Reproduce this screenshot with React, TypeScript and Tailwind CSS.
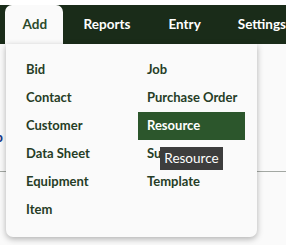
import React from "react";

const left = ["Bid", "Contact", "Customer", "Data Sheet", "Equipment", "Item"];
const right = ["Job", "Purchase Order", "Resource", "Subcontract", "Template"];

export default function App() {
  return (
    <div
      className="relative w-[286px] h-[245px] overflow-hidden bg-[#fafafa]"
      style={{ fontFamily: "Lato, 'Open Sans', sans-serif" }}
    >
      <div className="h-[5px] bg-white" />
      <div className="flex h-[39px] bg-[#1a2c19] items-stretch">
        <div className="ml-[5px] w-[59px] bg-[#fafafa] rounded-t-[7px] flex items-center justify-center pl-[2px] text-[13.5px] font-bold text-[#2b4a2b]">
          Add
        </div>
        <div className="flex items-center text-white font-bold text-[13.5px]">
          <span className="ml-[21px]">Reports</span>
          <span className="ml-[38px]">Entry</span>
          <span className="ml-[37px] whitespace-nowrap">Settings</span>
        </div>
      </div>
      <div className="relative pt-[86px]">
        <div className="text-[#1b3b8a] text-[14px] font-bold -ml-[5px] leading-none">p</div>
        <div className="mt-[27px] h-px bg-[#a3a8a3]" />
      </div>
      <div className="absolute left-[6px] top-[44px] w-[251px] h-[193px] bg-[#fafafa] rounded-b-[7px] shadow-[0_2px_6px_rgba(0,0,0,0.3)] pt-[12px] pl-[11px]">
        <div className="grid grid-cols-[107px_107px] gap-x-[14px]">
          <div className="flex flex-col">
            {left.map((t) => (
              <div key={t} className="h-[28px] flex items-center px-[9px] text-[13px] font-bold text-[#263d26] whitespace-nowrap">
                {t}
              </div>
            ))}
          </div>
          <div className="flex flex-col">
            {right.map((t) => (
              <div
                key={t}
                className={
                  "h-[28px] flex items-center px-[9px] text-[13px] font-bold whitespace-nowrap " +
                  (t === "Resource" ? "bg-[#2c562c] text-white" : "text-[#263d26]")
                }
              >
                {t}
              </div>
            ))}
          </div>
        </div>
      </div>
      <div className="absolute left-[160px] top-[147px] w-[63px] h-[23px] bg-[#3d3d3d] text-white text-[13.5px] flex items-center justify-center">
        Resource
      </div>
    </div>
  );
}
